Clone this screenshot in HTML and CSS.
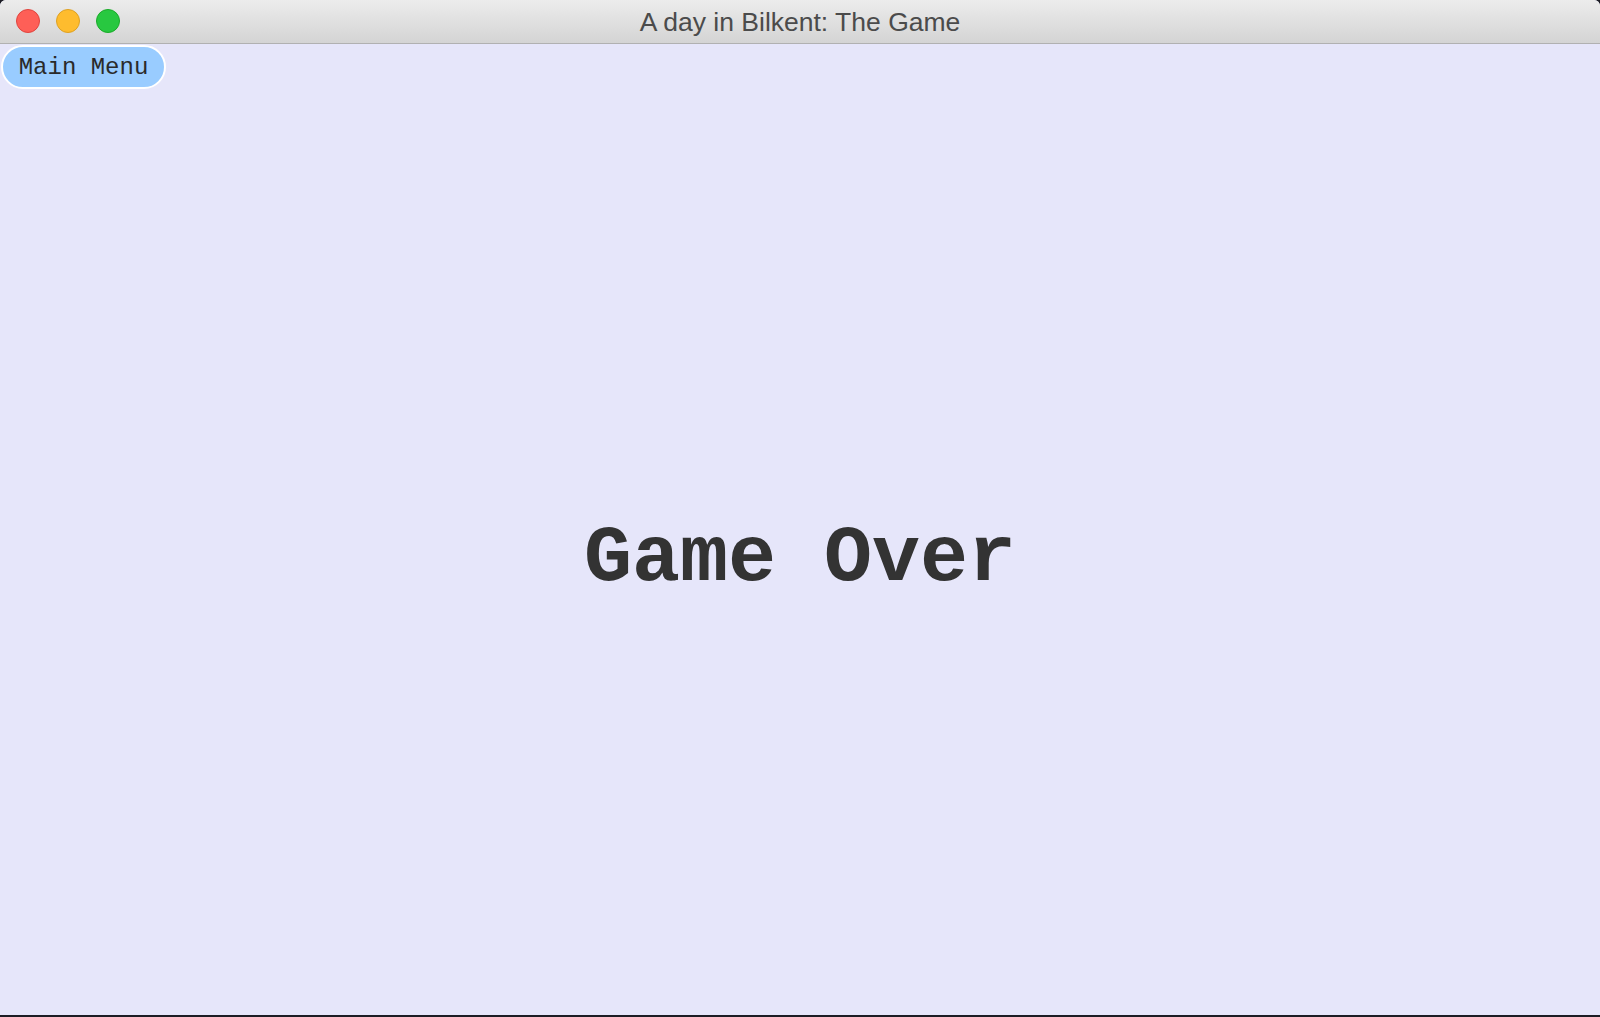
FILE: index.html
```html
<!DOCTYPE html>
<html>
<head>
<meta charset="utf-8">
<link rel="stylesheet" href="styles.css">
</head>
<body>
<div class="window">
  <div class="titlebar">
    <div class="lights">
      <span class="light red"></span>
      <span class="light yellow"></span>
      <span class="light green"></span>
    </div>
    <div class="title">A day in Bilkent: The Game</div>
  </div>
  <div class="content">
    <div class="toolbar">
      <button class="menu-btn">Main Menu</button>
    </div>
    <div class="center">
      <h1 class="gameover">Game Over</h1>
    </div>
  </div>
</div>
</body>
</html>
```

FILE: styles.css
```css
html, body {
  margin: 0;
  padding: 0;
  width: 1600px;
  height: 1017px;
  background: #1c1c24;
  overflow: hidden;
}
.window {
  width: 1600px;
  height: 1015px;
  display: flex;
  flex-direction: column;
  border-radius: 6px 6px 0 0;
  overflow: hidden;
  background: #e6e6fa;
}
.titlebar {
  height: 43px;
  flex: 0 0 43px;
  border-bottom: 1px solid #b1b1b1;
  background: linear-gradient(#ececec, #d4d4d4);
  position: relative;
  display: flex;
  align-items: center;
  justify-content: center;
}
.lights {
  position: absolute;
  left: 16px;
  top: 9px;
  display: flex;
  gap: 16px;
}
.light {
  width: 24px;
  height: 24px;
  border-radius: 50%;
  box-sizing: border-box;
}
.red { background: #fe5f57; border: 1px solid #e0443e; }
.yellow { background: #febc2e; border: 1px solid #dea123; }
.green { background: #28c840; border: 1px solid #1aab29; }
.title {
  font-family: "Liberation Sans", Arial, sans-serif;
  font-size: 26.5px;
  color: #4b4b4b;
  margin-top: 2px;
}
.content {
  flex: 1;
  display: flex;
  flex-direction: column;
  background: #e6e6fa;
}
.toolbar {
  padding: 1px 0 0 1px;
}
.menu-btn {
  font-family: "Courier New", "Nimbus Mono PS", "FreeMono", "Liberation Mono", monospace;
  font-size: 24px;
  color: #2a2a2a;
  background: #99ccff;
  border: 2px solid #ffffff;
  border-radius: 22px;
  width: 165px;
  height: 44px;
  padding: 0;
  margin: 0;
  display: flex;
  align-items: center;
  justify-content: center;
}
.center {
  flex: 1;
  display: flex;
  align-items: center;
  justify-content: center;
  padding-top: 14px;
}
.gameover {
  margin: 0;
  font-family: "Courier New", "Nimbus Mono PS", "FreeMono", "Liberation Mono", monospace;
  font-weight: bold;
  font-size: 80px;
  color: #333333;
  line-height: 1;
}
```
